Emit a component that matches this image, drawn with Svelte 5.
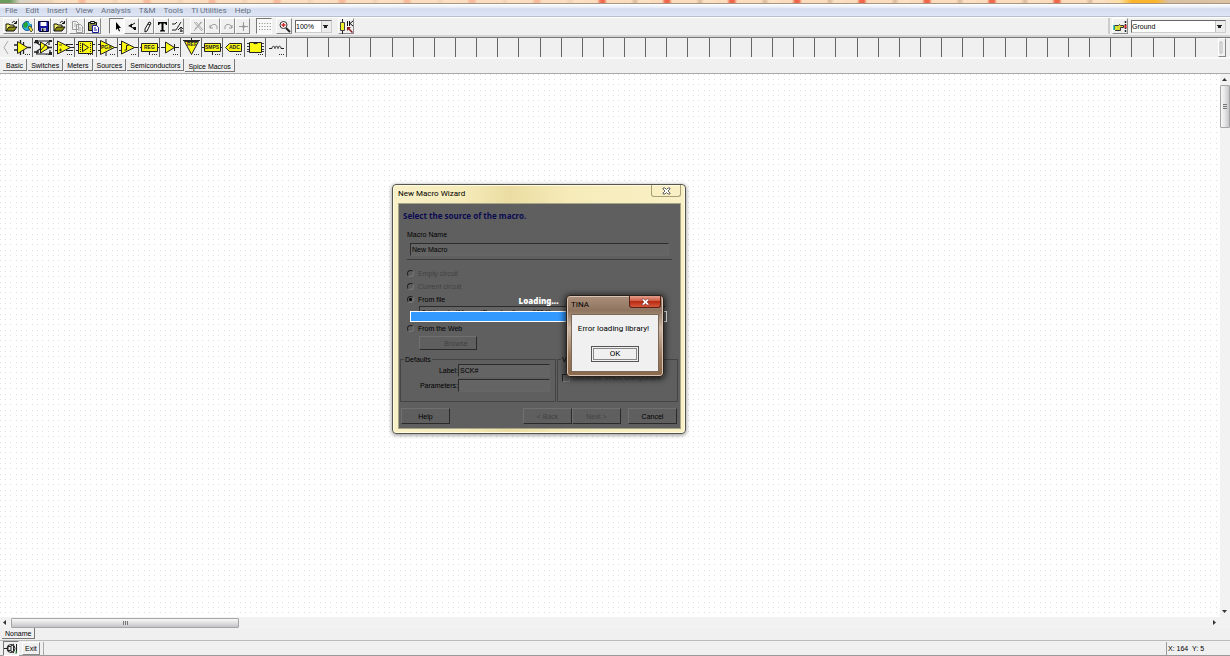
<script>
  const menus = ['File', 'Edit', 'Insert', 'View', 'Analysis', 'T&M', 'Tools', 'TI Utilities', 'Help'];
  const groups = [
    ['open', 'web', 'save', 'open2'],
    ['copy', 'paste'],
    ['arrow', 'undoPart', 'pen', 'text', 'wire'],
    ['cut', 'undo', 'redo', 'plus'],
    ['grid'],
    ['zoom']
  ];
  const disabled = ['copy', 'cut', 'undo', 'redo', 'plus'];
  const pressed = ['arrow', 'grid'];
  const parts = ['macro', 'switchAmp', 'opamp', 'diffAmp', 'pga', 'comparator', 'reg', 'buffer', 'ref', 'smps', 'adc', 'chip', 'coil'];
  const cells = Array.from({ length: 57 }, (_, i) => parts[i] ?? '');
  const tabs = ['Basic', 'Switches', 'Meters', 'Sources', 'Semiconductors', 'Spice Macros'];
  let activeTab = $state('Spice Macros');
  let source = $state('file');
  let macroName = $state('New Macro');
  let label = $state('SCK#');
</script>

{#snippet tool(name)}
  <svg viewBox="0 0 15 15" width="15" height="15" aria-hidden="true">
    {#if name === 'open' || name === 'open2'}
      <path d="M2 12V5h3l1 1h4v2" fill="#f5ee6a" stroke="#111" />
      <path d="M2 12l3-4h8l-3 4z" fill="#8c8a10" stroke="#111" />
      <path d="M8 4c1-2 3-2 4 0M12.500 2v2.500H10" fill="none" stroke="#111" />
    {:else if name === 'web'}
      <circle cx="7" cy="7" r="4.500" fill="#28b6d8" stroke="#15569b" />
      <path d="M4 4l3-1 1 3-2 3-3-1z" fill="#27a033" />
      <path d="M8 8l2-1 3 4-2 2z" fill="#e8dd33" stroke="#222" stroke-width=".7" />
      <path d="M9 3l2 2" stroke="#fff" />
    {:else if name === 'save'}
      <path d="M2.500 2.500h10v10h-9l-1-1z" fill="#1717a0" stroke="#050535" />
      <path d="M4.500 3h6v4h-6z" fill="#fff" />
      <path d="M5 9h5v3H5z" fill="#bcbcc8" />
      <path d="M6 9.500h1.500V12H6z" fill="#111" />
    {:else if name === 'copy'}
      <path d="M2.500 2.500h4l2 2v6h-6zM6.500 5.500h4l2 2v6h-6z" fill="#f2f2f2" stroke="#9a9a9a" />
      <path d="M8 9h3M8 11h3M4 5h2M4 7h2" stroke="#b2b2b2" />
    {:else if name === 'paste'}
      <path d="M2.500 3.500h8v8h-8z" fill="#8e8e3c" stroke="#111" />
      <path d="M4.500 2.500h4v2h-4z" fill="#ddd" stroke="#111" />
      <path d="M6.500 6.500h4l2 2v5h-6z" fill="#fff" stroke="#17179a" />
      <path d="M8 9h2M8 11h3" stroke="#17179a" />
    {:else if name === 'arrow'}
      <path d="M6 3v8l1.700-1.600L9 12.500l1-.5-1.200-3H11z" fill="#000" />
    {:else if name === 'undoPart'}
      <path d="M10 4L5 7l3 2 2 2" fill="none" stroke="#111" />
      <path d="M3 7l4-2.500v4zM8 8h3v3H9z" fill="#111" />
    {:else if name === 'pen'}
      <path d="M9 3l2 1-4 8-2 1V10z" fill="#fff" stroke="#111" />
      <path d="M8 5l2 1" stroke="#111" />
    {:else if name === 'text'}
      <path d="M3 3h9v3h-1L10 4.500H8.500V11l1.500.5v1H5v-1l1.500-.5V4.500H5L4 6H3z" fill="#000" />
    {:else if name === 'wire'}
      <path d="M2 5h3l2-2M2 11h4L11 3M8 11l3-3 2 2M10 12h3M11 9v4" fill="none" stroke="#222" />
    {:else if name === 'cut'}
      <path d="M3 3l8 9M11 3l-8 9M5 3l7 8M10 3L4 10" fill="none" stroke="#aaa" />
    {:else if name === 'undo'}
      <path d="M4 6v3h3M4 9c1-5 8-5 7 1" fill="none" stroke="#999" />
    {:else if name === 'redo'}
      <path d="M11 6v3H8M11 9C10 4 3 4 4 10" fill="none" stroke="#999" />
    {:else if name === 'plus'}
      <path d="M7.500 3v9M3 7.500h9" stroke="#999" /><circle cx="7.500" cy="7.500" r="1.500" fill="#999" />
    {:else if name === 'grid'}
      <path d="M2 4.500h12M2 7.500h12M2 10.500h12" stroke="#888" stroke-dasharray="1 1.700" />
    {:else if name === 'zoom'}
      <path d="M9 9l4 4" stroke="#222" stroke-width="2" />
      <circle cx="6.500" cy="6" r="3.500" fill="#fff" stroke="#333" />
      <path d="M4.500 6h4M6.500 4v4" stroke="#d32222" stroke-width="1.400" />
    {:else if name === 'resistor'}
      <path d="M3.500 0v15" stroke="#222" /><path d="M1.500 3.500h4v8h-4z" fill="#f2ef2c" stroke="#444" />
      <path d="M8.500 2v5M10.500 2v5M14 2l-3 2.500L14 7" fill="none" stroke="#111" />
      <path d="M8 8h4l-1.500 1.500L14 13l-1 1-3.500-3.500L8 12z" fill="#8c1c1c" />
    {:else if name === 'find'}
      <path d="M1.500 6.500h4l1-1 1 1h3v2h-3v3h-5l-1-1z" fill="#d9dc32" stroke="#333" />
      <path d="M1 6v5" stroke="#1fb0b0" stroke-width="1.500" />
      <path d="M12.500 2v11" stroke="#222" stroke-width="1.500" stroke-dasharray="2 1" />
      <path d="M12.500 6v3" stroke="#d32222" stroke-width="2" />
    {/if}
  </svg>
{/snippet}

{#snippet part(name)}
  <svg viewBox="0 0 21 19" width="21" height="19" aria-hidden="true">
    <g fill="#fbf816" stroke="#222" stroke-width="1">
      {#if name === 'macro'}
        <path d="M2 7h5M2 12h5M14 9.500h5M8.500 2v3M8.500 14v3M11.500 4v3M11.500 12v4" stroke-width="1.300" />
        <path d="M5.500 3.500v12l10-6z" />
      {:else if name === 'switchAmp'}
        <path d="M2 3h15M3 16h15M4 3v2l3 2M4 16v-3l3-2M16 3v4M17 12v4" fill="none" stroke-width="1.200" />
        <path d="M7.500 4v11l9-5.500z" /><path d="M1 4.500h5M1 14h5M14 9.500h5" stroke-width="1.500" />
        <path d="M7 13l8-9" /><path d="M2 2h3v3H2zM16 14h3v3h-3zM16 2h3v2h-3z" fill="#222" stroke="none" />
      {:else if name === 'opamp'}
        <path d="M1 6.500h4M1 12.500h4M14 9.500h6M12 6.500h7M12 12.500h7" />
        <path d="M3.500 3v13l13-6.500z" /><path d="M5 7h3M5 12h3M6.500 10.500v3" stroke-width=".8" />
      {:else if name === 'diffAmp'}
        <path d="M1 6.500h3M1 12.500h3M17 6.500h3M17 12.500h3" />
        <path d="M3.500 3.500h14v12h-14z" /><path d="M7.500 5.500v8l6-4z" />
        <path d="M5.500 5v9M15.500 5v9" stroke-dasharray="1 1" />
      {:else if name === 'pga'}
        <path d="M1 6.500h3M1 12.500h3M15 9.500h5M9 1v4M9 14v4" /><path d="M3.500 2.500v14l14-7z" />
        <text x="4" y="11" class="tag">PGA</text>
      {:else if name === 'comparator'}
        <path d="M1 6.500h4M1 12.500h4M15 9.500h5" /><path d="M3.500 3v13l13-6.500z" />
        <path d="M6.500 12h2V7.500h2" fill="none" />
      {:else if name === 'reg'}
        <path d="M1 9.500h3M17 9.500h3M10.500 13v4" /><path d="M2.500 5.500h16v8h-16z" />
        <text x="5" y="11" class="tag">REG</text>
      {:else if name === 'buffer'}
        <path d="M1 9.500h5M13 9.500h6" /><path d="M5.500 4v11l9-5.500z" /><path d="M14.500 6v7" />
      {:else if name === 'ref'}
        <path d="M2 2.500h17M10.500 0v3" /><path d="M3.500 3.500h14l-7 13z" />
        <text x="6" y="8" class="tag">REF</text>
      {:else if name === 'smps'}
        <path d="M0 9.500h3M18 9.500h3M10.500 13v4" /><path d="M2.500 5.500h16v8h-16z" />
        <text x="3" y="11" class="tag">SMPS</text>
      {:else if name === 'adc'}
        <path d="M6.500 5.500h12v8h-12L2.500 9.500z" /><text x="6" y="11" class="tag">ADC</text>
      {:else if name === 'chip'}
        <path d="M2 5.500h17M2 8.500h17M2 11.500h17M2 13.500h17" stroke-width=".9" /><path d="M4.500 4.500h12v10h-12z" /><path d="M8 4.500c1 1.500 4 1.500 5 0" fill="#222" />
      {:else if name === 'coil'}
        <path d="M3 10.500h3c0-3 3-3 3 0c0-3 3-3 3 0c0-3 3-3 3 0h3" fill="none" />
      {/if}
    </g>
    <path d="M13 16.500h6" stroke="#333" stroke-dasharray="1 1" />
  </svg>
{/snippet}

<div class="app">
  <div class="aero"></div>
  <nav class="menu">
    {#each menus as m}<button>{m}</button>{/each}
  </nav>

  <div class="toolbar">
    {#each groups as g, i}
      <div class="group g{i}">
        {#each g as t}
          <button class="tool" class:pressed={pressed.includes(t)} disabled={disabled.includes(t)} aria-label={t}>{@render tool(t)}</button>
        {/each}
      </div>
    {/each}
    <select class="zoom" aria-label="Zoom"><option>100%</option></select>
    <button class="tool" aria-label="Values">{@render tool('resistor')}</button>
    <div class="finder">
      <button class="tool" aria-label="Find component">{@render tool('find')}</button>
      <select class="component" aria-label="Component"><option>Ground</option></select>
    </div>
  </div>

  <div class="palette">
    <button class="scroll left" aria-label="Scroll left"><svg viewBox="0 0 9 19" width="9" height="19"><path d="M8 3L4 9.500 8 16" fill="none" stroke="#aaa" /></svg></button>
    <div class="cells">
      {#each cells as c}
        <div class="cell">{#if c}<button aria-label={c}>{@render part(c)}</button>{/if}</div>
      {/each}
    </div>
    <button class="scroll right" aria-label="Scroll right"><svg viewBox="0 0 5 17" width="5" height="17"><path d="M1 3v11h2V3z" fill="#eee" stroke="#bbb" /></svg></button>
  </div>
  <div class="tabs">
    {#each tabs as t}
      <button class:active={activeTab === t} onclick={() => (activeTab = t)}>{t}</button>
    {/each}
  </div>

  <main class="workspace">
    <div class="canvas"></div>
    <div class="vbar">
      <button aria-label="Up"><svg viewBox="0 0 9 9" width="9" height="9"><path d="M2 6h5L4.500 3z" fill="#333" /></svg></button>
      <div class="thumb"><i></i></div>
      <button class="end" aria-label="Down"><svg viewBox="0 0 9 9" width="9" height="9"><path d="M2 3h5L4.500 6z" fill="#333" /></svg></button>
    </div>

    <section class="wizard" aria-label="New Macro Wizard">
      <header>
        <span>New Macro Wizard</span>
        <button aria-label="Close"><svg viewBox="0 0 9 8" width="9" height="8"><path d="M1 1h2l1.500 1.500L6 1h2v1L6 4l2 2v1H6L4.500 5.500 3 7H1V6l2-2-2-2z" fill="#fff" stroke="#555" stroke-width=".9" /></svg></button>
      </header>
      <div class="client">
        <h1>Select the source of the macro.</h1>
        <label class="caption" for="macro-name">Macro Name</label>
        <input class="name" id="macro-name" type="text" bind:value={macroName} />
        <hr />
        <label class="radio off"><input type="radio" name="src" value="empty" bind:group={source} disabled />Empty circuit</label>
        <label class="radio off"><input type="radio" name="src" value="current" bind:group={source} disabled />Current circuit</label>
        <label class="radio"><input type="radio" name="src" value="file" bind:group={source} />From file</label>
        <input class="path" type="text" aria-label="File path" value="C:\Users\...\Macros\Download\sscm005.lib" />
        <label class="radio web"><input type="radio" name="src" value="web" bind:group={source} />From the Web</label>
        <button class="btn browse" disabled>Browse</button>
        <div class="sets">
          <fieldset>
            <legend>Defaults</legend>
            <div class="field"><label for="lab">Label:</label><input id="lab" type="text" bind:value={label} /></div>
            <div class="field"><label for="par">Parameters:</label><input id="par" type="text" /></div>
          </fieldset>
          <fieldset class="vhdl">
            <legend>VHDL</legend>
            <label class="check"><input type="checkbox" disabled />Generate VHDL Component</label>
          </fieldset>
        </div>
        <footer>
          <button class="btn">Help</button>
          <button class="btn back" disabled>&lt; Back</button>
          <button class="btn" disabled>Next &gt;</button>
          <button class="btn cancel">Cancel</button>
        </footer>
        <div class="loading">
          <strong>Loading...</strong>
          <div class="progress"><div style="width: 99%"></div></div>
        </div>
      </div>
    </section>

    <section class="alert" role="alertdialog" aria-label="TINA">
      <header>
        <span>TINA</span>
        <button aria-label="Close"><svg viewBox="0 0 9 8" width="9" height="8"><path d="M1 1h2l1.500 1.500L6 1h2v1L6 4l2 2v1H6L4.500 5.500 3 7H1V6l2-2-2-2z" fill="#fff" stroke="#733" stroke-width=".6" /></svg></button>
      </header>
      <div class="body">
        <p>Error loading library!</p>
        <button>OK</button>
      </div>
    </section>
  </main>

  <div class="hbar">
    <button aria-label="Left"><svg viewBox="0 0 9 9" width="9" height="9"><path d="M6 2v5L3 4.500z" fill="#333" /></svg></button>
    <div class="thumb"><i></i></div>
    <button class="end" aria-label="Right"><svg viewBox="0 0 9 9" width="9" height="9"><path d="M3 2v5l3-2.500z" fill="#333" /></svg></button>
  </div>
  <div class="sheets"><button>Noname</button></div>
  <div class="status">
    <button class="sim" aria-label="Simulation"><svg viewBox="0 0 14 13" width="14" height="13"><circle cx="7" cy="6.500" r="4" fill="none" stroke="#222" /><path d="M0 6.500h4M4 4.500h3v4H4zM7 4l3-2M7 9l3 2M9.500 4v5M12.500 2v9" fill="none" stroke="#222" /><path d="M12 9v3" stroke="#3a3" /></svg></button>
    <button class="exit">Exit</button>
    <div class="message"></div>
    <div class="coords">X: 164&nbsp; Y: 5</div>
  </div>
</div>

<style>
  :global(body) { background: #f0f0f0; }
  .app, .app * { box-sizing: border-box; }
  .app {
    display: flex; flex-direction: column; height: 100vh; overflow: hidden;
    font: 7px/9px "Liberation Sans", Arial, sans-serif; color: #000; background: #f0f0f0;
  }
  button, input, select { font: inherit; color: inherit; margin: 0; padding: 0; }
  button { border: 0; background: none; white-space: nowrap; }
  svg { display: block; }

  .aero {
    height: 4px; flex: none; border-bottom: 1px solid #a89684;
    background:
      linear-gradient(90deg, #6b9b5c 0 10px, #d9d3c8 20px, #e6cdb5 40px, transparent 60px),
      linear-gradient(90deg, transparent 90%, #fde3a8 91%, #fbb52c 92%, #fbb52c 94%, #d8c0a4 95%, #dcc3a2),
      linear-gradient(90deg, #fbdfc0b0 48%, transparent 49%),
      repeating-linear-gradient(90deg, transparent 0 12px, #f0664c 15px 19px, transparent 22px 65px),
      repeating-linear-gradient(90deg, #fbdcbc 0 46px, #d9b99a 50px, #fbe0c2 54px 65px);
  }
  .menu {
    height: 13px; flex: none; display: flex; align-items: center; gap: 8px; padding-left: 5px;
    font: 8px/11px Roboto, "Noto Sans", sans-serif; color: #66707f;
    background: linear-gradient(#fff, #e6ebf6 30%, #d4dcee 40%, #dfe6f5); border-bottom: 1px solid #b8bfcc;
  }
  .toolbar {
    height: 20px; flex: none; display: flex; align-items: center; padding: 0 0 1px 3px;
    border-top: 1px solid #fff; border-bottom: 2px solid #d4d4d4;
  }
  .group { display: flex; }
  .g1 { margin-left: 2px; }
  .g2 { margin-left: 8px; }
  .g3 { margin-left: 6px; }
  .g4 { margin-left: 6px; }
  .g5 { margin: 0 3px 0 4px; }
  .tool {
    width: 16px; height: 16px; display: grid; place-items: center;
    border: 1px solid; border-color: #fff #8a8a8a #8a8a8a #fff;
  }
  .g2 .tool, .g3 .tool { width: 15px; }
  .pressed { border-color: #777 #fff #fff #777; background: #f8f8f8; }
  select {
    height: 13px; appearance: none; border-radius: 0;
    border: 1px solid; border-color: #666 #ccc #ccc #666;
    background: linear-gradient(#222, #222) right 4px top 5px / 3px 2px no-repeat,
      linear-gradient(#222, #222) right 3px top 4px / 5px 1px no-repeat,
      linear-gradient(90deg, #999, #ececec 1px) right / 10px 11px no-repeat, #fff;
  }
  .zoom { width: 37px; margin-right: 6px; }
  .finder { margin-left: auto; display: flex; align-items: center; gap: 3px; padding: 0 4px 0 2px; border-left: 2px solid #ccc; }
  .component { width: 95px; }

  .palette { height: 22px; flex: none; display: flex; border-top: 1px solid #777; border-bottom: 2px solid #fafafa; }
  .scroll { width: 12px; overflow: hidden; }
  .scroll.right { width: 8px; margin: 0 4px 0 1px; border: 1px solid; border-color: #fff #888 #888 #fff; }
  .cells { flex: 1; display: grid; grid-template-columns: repeat(57, minmax(0, 1fr)); }
  .cell { border-right: 1px solid #666; overflow: hidden; }
  .cell:last-child { border: 0; }
  .tag { font: bold 5px "Liberation Sans", sans-serif; fill: #222; stroke: none; }

  .tabs { height: 15px; flex: none; display: flex; gap: 1px; padding-left: 3px; border-bottom: 1px solid #aaa; }
  .tabs button, .sheets button { height: 11px; padding: 0 3px; border: solid #777; border-width: 0 1px 1px 0; }
  .tabs button { height: 12px; padding-top: 1px; }
  .tabs .active { height: 13px; padding-top: 2px; }

  .workspace { flex: 1; min-height: 0; position: relative; display: flex; background: #fff; }
  .canvas {
    flex: 1;
    background-image:
      conic-gradient(from 270deg at 1px 1px, #dedede 90deg, transparent 0),
      conic-gradient(from 270deg at 1px 1px, #dedede 90deg, transparent 0),
      conic-gradient(from 270deg at 1px 1px, #dedede 90deg, transparent 0),
      conic-gradient(from 270deg at 1px 1px, #dedede 90deg, transparent 0),
      conic-gradient(from 270deg at 1px 1px, #dedede 90deg, transparent 0),
      conic-gradient(from 270deg at 1px 1px, #dedede 90deg, transparent 0),
      conic-gradient(from 270deg at 1px 1px, #dedede 90deg, transparent 0),
      conic-gradient(from 270deg at 1px 1px, #dedede 90deg, transparent 0),
      conic-gradient(from 270deg at 1px 1px, #dedede 90deg, transparent 0);
    background-size: 16px 16px;
    background-position: 0 0, 5px 0, 10px 0, 0 5px, 5px 5px, 10px 5px, 0 10px, 5px 10px, 10px 10px;
  }
  .vbar { width: 10px; display: flex; flex-direction: column; background: #f2f2f2; }
  .vbar button { height: 11px; }
  .thumb { border: 1px solid #a5a5a5; border-radius: 1px; display: grid; place-items: center; }
  .vbar .thumb { height: 43px; background: linear-gradient(90deg, #f8f8f8, #e4e4e6 50%, #c4c4c8); }
  .vbar i { width: 4px; height: 5px; background: repeating-linear-gradient(#777 0 1px, #ddd 1px 2px); }
  .vbar .end { margin-top: auto; }
  .hbar { height: 11px; flex: none; display: flex; align-items: center; padding-right: 9px; background: #f2f2f2; }
  .hbar button { width: 11px; }
  .hbar .thumb { width: 228px; height: 10px; background: linear-gradient(#f8f8f8, #e0e0e2 50%, #c4c4c8); }
  .hbar i { width: 5px; height: 4px; background: repeating-linear-gradient(90deg, #777 0 1px, #ddd 1px 2px); }
  .hbar .end { margin-left: auto; }
  .sheets { height: 12px; flex: none; padding-left: 2px; }
  .status { height: 16px; flex: none; display: flex; align-items: center; padding-left: 3px; border-top: 1px solid #bbb; border-bottom: 1px solid #999; }
  .sim { border: 1px solid; border-color: #777 #fff #fff #777; }
  .exit { margin: 0 3px; height: 13px; padding: 0 2px; border: 1px solid; border-color: #fff #888 #888 #fff; }
  .message { flex: 1; height: 13px; border-left: 1px solid #aaa; }
  .coords { width: 64px; height: 13px; border-left: 1px solid #999; line-height: 13px; padding-left: 1px; }

  .wizard {
    position: absolute; left: 392px; top: 110px; width: 294px; height: 250px; padding: 0 4px 4px 5px;
    display: flex; flex-direction: column;
    border: 1px solid #55554d; border-radius: 4px;
    background: linear-gradient(90deg, #f8f0c8, #f5eab8 25%, #ebdda2 40%, #f6ebb9 60%, #f9f0c6);
    box-shadow: inset 0 0 0 1px #fffbe2, 0 1px 4px #0007;
  }
  .wizard header { height: 18px; display: flex; justify-content: space-between; font: 8px/18px Roboto, "Noto Sans", sans-serif; }
  .wizard header button { width: 30px; height: 12px; display: grid; place-items: center; border: 1px solid #a89f77; border-top: 0; border-radius: 0 0 3px 3px; }
  .client {
    position: relative; flex: 1; display: flex; flex-direction: column; align-items: flex-start;
    border: 1px solid #a7a387; background: #5f5f5f; color: #000;
  }
  h1 { margin: 0; height: 24px; padding-left: 4px; font: bold 8px/23px "Noto Sans", Verdana, sans-serif; color: #0a0a50; }
  .caption { margin-left: 8px; height: 14px; line-height: 13px; }
  .client input[type="text"] {
    height: 13px; padding-left: 1px; border: 1px solid; border-color: #2c2c2c #666 #666 #2c2c2c;
    background: #646464; border-radius: 0; min-width: 0;
  }
  .client .name { align-self: stretch; margin: 1px 11px 0; }
  hr { align-self: stretch; margin: 3px 8px 7px; height: 1px; border: 0; background: #3c3c3c; flex: none; }
  .radio { height: 13px; flex: none; display: flex; align-items: center; gap: 4px; margin-left: 8px; }
  .radio input { appearance: none; width: 7px; height: 7px; border-radius: 50%; border: 1px solid; border-color: #222 #777 #777 #222; }
  .radio input:checked { background: radial-gradient(#000 0 1px, #646464 2px); }
  .off, .btn:disabled { color: #424242; }
  .client .path { width: 247px; margin-left: 20px; flex: none; }
  .web { margin-top: 3px; }
  .btn { width: 49px; height: 16px; border: 1px solid; border-color: #707070 #2a2a2a #2a2a2a #707070; }
  .btn.browse { width: 58px; height: 14px; flex: none; margin: 1px 0 0 20px; padding-left: 16px; }
  .sets { align-self: stretch; display: flex; gap: 1px; margin: 5px 2px 0 1px; height: 47px; }
  fieldset { margin: 0; padding: 0 5px 0 0; width: 156px; min-width: 0; border: 1px solid #444; }
  .vhdl { flex: 1; width: auto; }
  legend { padding: 0 1px; margin-left: 3px; height: 9px; }
  .field { display: flex; align-items: center; justify-content: flex-end; height: 13px; margin-bottom: 2px; }
  .field input { width: 92px; }
  .check { display: flex; align-items: center; gap: 3px; margin: 9px 0 0 4px; color: #424242; white-space: nowrap; }
  .check input { appearance: none; width: 8px; height: 8px; border: 1px solid; border-color: #222 #777 #777 #222; }
  footer { align-self: stretch; display: flex; margin: 6px 3px 0 2px; }
  .back { margin-left: auto; }
  .cancel { margin-left: 7px; }
  .loading { position: absolute; left: 11px; right: 13px; top: 92px; text-align: center; color: #fff; font: bold 8px/10px "Noto Sans", Verdana, sans-serif; }
  .progress { margin-top: 5px; height: 11px; border: 1px solid #fff; }
  .progress div { height: 100%; background: #3399fc; }

  .alert {
    position: absolute; left: 566px; top: 221px; width: 98px; height: 82px; padding: 0 4px 4px;
    display: flex; flex-direction: column;
    border: 1px solid #2b211b; border-radius: 4px;
    background: linear-gradient(#ab8f7a, #8f7560 18%, #cbb7a6 40%, #9a7a5e 75%, #8a6849);
    box-shadow: inset 0 0 0 1px #d8c5b5, 0 1px 6px 1px #000b;
  }
  .alert header { height: 18px; margin-right: -2px; display: flex; justify-content: space-between; font: 8px/17px Roboto, "Noto Sans", sans-serif; }
  .alert header button { width: 32px; height: 12px; display: grid; place-items: center; border: 1px solid #5d2018; border-top: 0; border-radius: 0 0 3px 3px; background: linear-gradient(#e3a08f, #cf5a41 45%, #b82a12 50%, #d4583a); }
  .body { flex: 1; display: flex; flex-direction: column; align-items: center; border: 1px solid #fff; outline: 1px solid #7d6958; outline-offset: -1px; background: #f0f0f0; }
  .body p { margin: 9px 0 12px; padding-right: 3px; font: 8px/10px Roboto, "Noto Sans", sans-serif; white-space: nowrap; }
  .body button { width: 48px; height: 16px; border: 1px solid #555; outline: 1px solid #888; outline-offset: -3px; font: 8px/12px Roboto, "Noto Sans", sans-serif; }
</style>
